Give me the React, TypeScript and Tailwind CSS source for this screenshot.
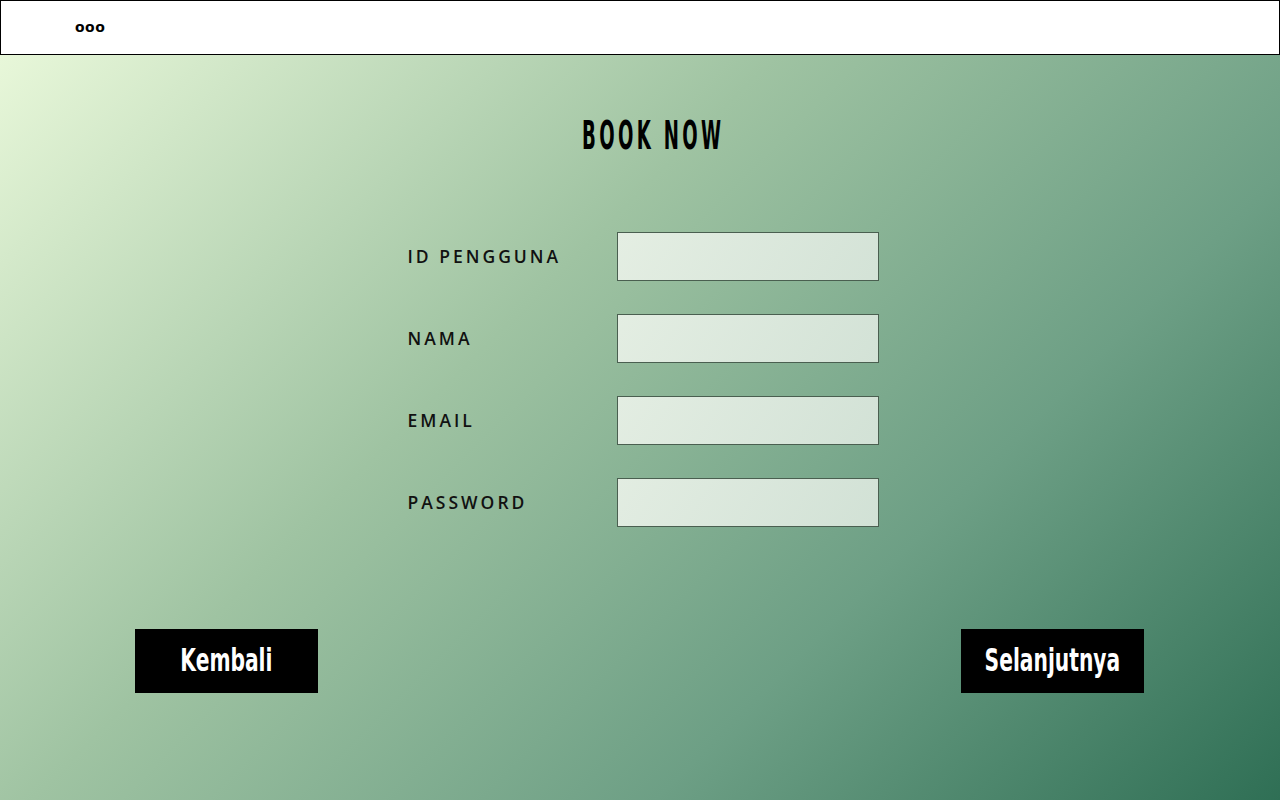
import React from "react";

const fields = ["ID PENGGUNA", "NAMA", "EMAIL", "PASSWORD"];

const condensed = "font-['DejaVu_Sans_Condensed','DejaVu_Sans',sans-serif]";

export default function App() {
  return (
    <div className="min-h-[800px] w-full bg-[linear-gradient(135deg,#edfbdd_0%,#9fc3a2_40%,#6d9f85_70%,#2f6f55_100%)]">
      {/* top bar */}
      <div className="h-[55px] border border-black bg-white flex items-center pl-[74px]">
        <span className="font-['DejaVu_Sans',sans-serif] font-bold text-[14px] tracking-[0.5px] text-black leading-none -mt-[2px]">
          ooo
        </span>
      </div>

      <div className="flex justify-center pt-[63px] pl-[27px]">
        <h1 className={`${condensed} font-bold text-[36px] leading-none tracking-[6px] text-black scale-x-[0.56] scale-y-[1.08]`}>
          BOOK NOW
        </h1>
      </div>

      <div className="flex justify-center pt-[78px] pl-[6px]">
        <div className="flex flex-col gap-[33px]">
          {fields.map((f) => (
            <div key={f} className="flex items-center">
              <label className="w-[209px] font-['Open_Sans',sans-serif] font-semibold text-[17.5px] tracking-[3px] text-[#111]">
                {f}
              </label>
              <div className="w-[262px] h-[49px] border border-[#4a5f50] bg-[linear-gradient(120deg,rgba(236,243,234,0.9),rgba(220,232,222,0.9))]" />
            </div>
          ))}
        </div>
      </div>

      <div className="flex justify-between pl-[135px] pr-[136px] pt-[102px]">
        {["Kembali", "Selanjutnya"].map((b) => (
          <button
            key={b}
            className="w-[183px] h-[64px] bg-black flex items-center justify-center"
          >
            <span className={`${condensed} font-bold text-[30px] text-white leading-none scale-x-[0.75] scale-y-[1.05]`}>
              {b}
            </span>
          </button>
        ))}
      </div>
    </div>
  );
}
